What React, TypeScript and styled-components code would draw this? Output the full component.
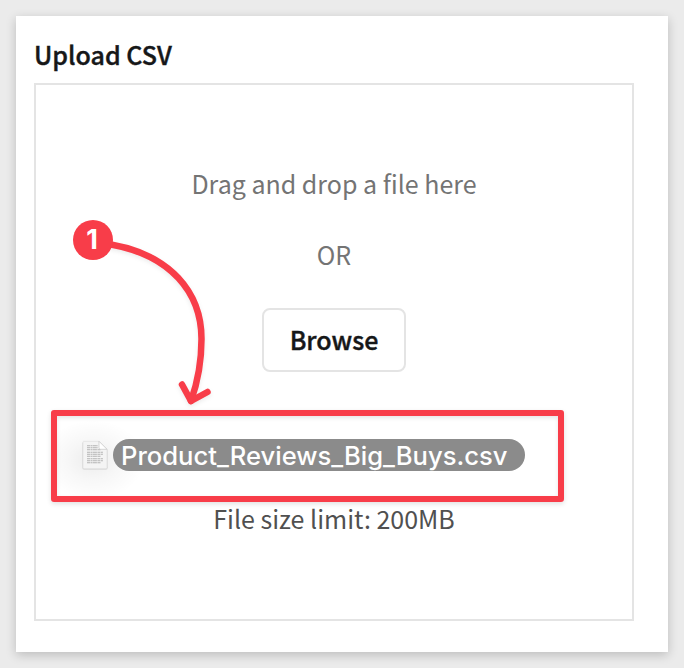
import React from "react";
import styled, { createGlobalStyle } from "styled-components";

const GlobalStyle = createGlobalStyle`
  *, *::before, *::after { box-sizing: border-box; }
  html, body { margin: 0; height: 100%; background: #ebebeb; overflow: hidden; }
  body { font-family: "Noto Sans CJK SC", "Noto Sans", sans-serif; -webkit-font-smoothing: antialiased; }
`;

const Page = styled.main`
  position: relative;
  width: 684px;
  height: 668px;
  padding: 16px;
`;

const Card = styled.section`
  height: 636px;
  padding: 18px 34px 31px 18px;
  display: flex;
  flex-direction: column;
  background: #fff;
  box-shadow: 0 3px 10px rgba(0, 0, 0, 0.2);
`;

const Title = styled.h1`
  margin: 0;
  height: 49px;
  line-height: 40px;
  font-size: 25px;
  font-weight: 500;
  -webkit-text-stroke: 0.4px #161718;
  color: #161718;
  white-space: nowrap;
`;

const DropZone = styled.div`
  flex: 1;
  display: flex;
  flex-direction: column;
  align-items: center;
  padding-top: 78px;
  border: 2px solid #e4e4e4;
`;

const Hint = styled.p<{ $tone: string; $gap: number }>`
  margin: 0 0 ${(p) => p.$gap}px;
  height: 40px;
  line-height: 40px;
  font-size: 25px;
  color: ${(p) => p.$tone};
  white-space: nowrap;
`;

const BrowseButton = styled.button`
  width: 144px;
  height: 64px;
  margin-bottom: 126px;
  padding: 0 0 2px;
  border: 2px solid #e4e4e4;
  border-radius: 8px;
  background: #fff;
  font: 500 25px/40px "Noto Sans CJK SC", "Noto Sans", sans-serif;
  -webkit-text-stroke: 0.4px #161718;
  color: #161718;
`;

const DraggedFile = styled.div`
  position: absolute;
  left: 81px;
  top: 438px;
  display: flex;
  align-items: center;
  gap: 4px;

  &::before {
    content: "";
    position: absolute;
    left: -26px;
    top: -22px;
    width: 110px;
    height: 80px;
    background: radial-gradient(ellipse 52px 40px at 38px 44px, rgba(0, 0, 0, 0.075), rgba(0, 0, 0, 0.03) 50%, rgba(0, 0, 0, 0) 100%);
  }
`;

const FileIcon = styled.svg`
  position: relative;
  width: 28px;
  height: 34px;
`;

const FileName = styled.span`
  position: relative;
  width: 412px;
  height: 32px;
  padding-left: 8px;
  border-radius: 16px;
  background: #8b8b8b;
  font: 500 25.6px/33px Inter, sans-serif;
  color: #fff;
  white-space: nowrap;
`;

const Highlight = styled.div`
  position: absolute;
  left: 51px;
  top: 410px;
  width: 513px;
  height: 92px;
  border: 6px solid #f83d49;
  border-radius: 3px;
  box-shadow: 0 2px 5px rgba(0, 0, 0, 0.12), inset 0 2px 4px rgba(0, 0, 0, 0.1);
`;

const Arrow = styled.svg`
  position: absolute;
  left: 60px;
  top: 210px;
  width: 170px;
  height: 210px;
  filter: drop-shadow(0 2px 2px rgba(0, 0, 0, 0.08));
`;

const StepBadge = styled.div`
  position: absolute;
  left: 73px;
  top: 220px;
  width: 40px;
  height: 40px;
  padding-right: 2px;
  border-radius: 50%;
  background: #f83d49;
  color: #fff;
  font: 700 27px/39px Inter, sans-serif;
  text-align: center;
`;

const textRows = [8.5, 10.5, 12.5, 15, 17, 19, 21.5, 23.5, 25.5];

export default function App() {
  return (
    <>
      <GlobalStyle />
      <Page>
        <Card>
          <Title>Upload CSV</Title>
          <DropZone>
            <Hint $tone="#747474" $gap={31}>Drag and drop a file here</Hint>
            <Hint $tone="#747474" $gap={34}>OR</Hint>
            <BrowseButton>Browse</BrowseButton>
            <Hint $tone="#505050" $gap={0}>File size limit: 200MB</Hint>
          </DropZone>
        </Card>
        <DraggedFile>
          <FileIcon viewBox="0 0 28 34">
            <path d="M2 4h16l8.500 8v18a1.500 1.500 0 0 1-1.500 1.500h-22a1.500 1.500 0 0 1-1.500-1.500v-25z" fill="#bdbdbd" opacity=".6" />
            <path d="M2.500 3.300h15.500l8 8v18.500a1 1 0 0 1-1 1h-22a1 1 0 0 1-1-1v-25.500a1 1 0 0 1 .5-1z" fill="#f4f4f4" stroke="#dcdcdc" strokeWidth=".6" />
            {textRows.map((y, i) => (
              <path key={y} d={`M6 ${y - 1.500}h${i < 2 ? 11 : i % 3 === 2 ? 14 : 16}`} transform="translate(0 .8)" stroke="#b3b3b3" strokeWidth="1.100" strokeDasharray="3 .5 2 .4 4 .5" />
            ))}
            <path d="M18 3.300v6.500a1.500 1.500 0 0 0 1.500 1.500h6.500z" fill="#fff" stroke="#bcbcbc" strokeWidth=".6" />
          </FileIcon>
          <FileName>Product_Reviews_Big_Buys.csv</FileName>
        </DraggedFile>
        <Highlight />
        <Arrow viewBox="60 210 170 210" fill="none" stroke="#f83d49" strokeWidth="6.500" strokeLinecap="round" strokeLinejoin="round">
          <path d="M111 244.500C170 255 201.500 292 201.500 339C201.500 363 197 384 191 401" />
          <path d="M182 384.500L191 401L207.500 392" />
        </Arrow>
        <StepBadge>1</StepBadge>
      </Page>
    </>
  );
}
